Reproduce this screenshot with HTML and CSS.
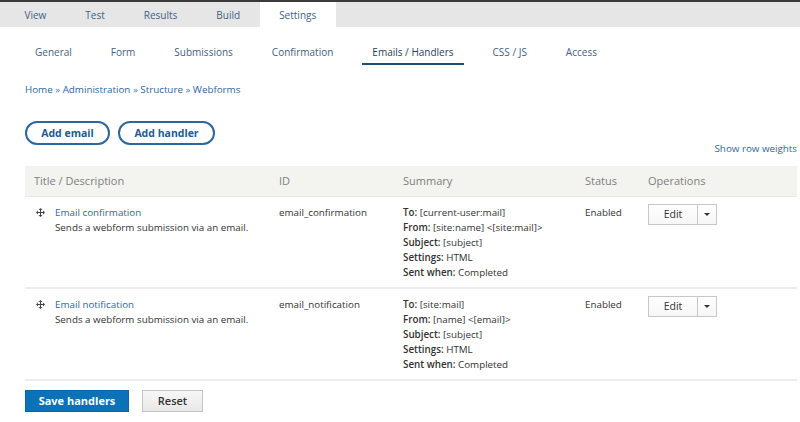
FILE: index.html
```html
<!DOCTYPE html>
<html>
<head>
<meta charset="utf-8">
<link rel="stylesheet" href="styles.css">
</head>
<body>
<nav class="primary-tabs">
  <a class="ptab">View</a>
  <a class="ptab">Test</a>
  <a class="ptab">Results</a>
  <a class="ptab">Build</a>
  <a class="ptab active">Settings</a>
</nav>
<nav class="secondary-tabs">
  <a class="stab">General</a>
  <a class="stab">Form</a>
  <a class="stab">Submissions</a>
  <a class="stab">Confirmation</a>
  <a class="stab active">Emails / Handlers</a>
  <a class="stab">CSS / JS</a>
  <a class="stab">Access</a>
</nav>
<main class="content">
  <div class="breadcrumb"><a>Home</a> » <a>Administration</a> » <a>Structure</a> » <a>Webforms</a></div>
  <div class="actions">
    <a class="pill">Add email</a>
    <a class="pill">Add handler</a>
  </div>
  <div class="weights"><a>Show row weights</a></div>
  <table class="handlers">
    <thead>
      <tr>
        <th class="c1">Title / Description</th>
        <th class="c2">ID</th>
        <th class="c3">Summary</th>
        <th class="c4">Status</th>
        <th class="c5">Operations</th>
      </tr>
    </thead>
    <tbody>
      <tr>
        <td class="c1">
          <div class="title-cell">
            <svg class="drag" width="9" height="9" viewBox="0 0 9 9"><path d="M4.5 0 L6.5 2 H5 V4 H7 V2.5 L9 4.5 L7 6.5 V5 H5 V7 H6.5 L4.5 9 L2.5 7 H4 V5 H2 V6.5 L0 4.5 L2 2.5 V4 H4 V2 H2.5 Z" fill="#444"/></svg>
            <div><a class="link">Email confirmation</a><div>Sends a webform submission via an email.</div></div>
          </div>
        </td>
        <td class="c2">email_confirmation</td>
        <td class="c3">
          <div><b>To:</b> [current-user:mail]</div>
          <div><b>From:</b> [site:name] &lt;[site:mail]&gt;</div>
          <div><b>Subject:</b> [subject]</div>
          <div><b>Settings:</b> HTML</div>
          <div><b>Sent when:</b> Completed</div>
        </td>
        <td class="c4">Enabled</td>
        <td class="c5"><div class="dropbutton"><span class="edit">Edit</span><span class="toggle"><span class="caret"></span></span></div></td>
      </tr>
      <tr>
        <td class="c1">
          <div class="title-cell">
            <svg class="drag" width="9" height="9" viewBox="0 0 9 9"><path d="M4.5 0 L6.5 2 H5 V4 H7 V2.5 L9 4.5 L7 6.5 V5 H5 V7 H6.5 L4.5 9 L2.5 7 H4 V5 H2 V6.5 L0 4.5 L2 2.5 V4 H4 V2 H2.5 Z" fill="#444"/></svg>
            <div><a class="link">Email notification</a><div>Sends a webform submission via an email.</div></div>
          </div>
        </td>
        <td class="c2">email_notification</td>
        <td class="c3">
          <div><b>To:</b> [site:mail]</div>
          <div><b>From:</b> [name] &lt;[email]&gt;</div>
          <div><b>Subject:</b> [subject]</div>
          <div><b>Settings:</b> HTML</div>
          <div><b>Sent when:</b> Completed</div>
        </td>
        <td class="c4">Enabled</td>
        <td class="c5"><div class="dropbutton"><span class="edit">Edit</span><span class="toggle"><span class="caret"></span></span></div></td>
      </tr>
    </tbody>
  </table>
  <div class="form-actions">
    <button class="btn primary">Save handlers</button>
    <button class="btn secondary">Reset</button>
  </div>
</main>
</body>
</html>
```
FILE: styles.css
```css
* { box-sizing: border-box; }
html, body {
  margin: 0;
  padding: 0;
  background: #fff;
  font-family: "Open Sans", "Liberation Sans", sans-serif;
  font-size: 9.8px;
  color: #333;
}
a { text-decoration: none; cursor: pointer; }

.primary-tabs {
  display: flex;
  border-top: 2px solid #3b3b3b;
  background: #e6e6e6;
  height: 27px;
  padding-left: 5px;
}
.ptab {
  display: flex;
  align-items: center;
  padding: 1px 19.5px 0;
  font-size: 10px;
  color: #3f6285;
}
.ptab.active { background: #fff; }

.secondary-tabs {
  display: flex;
  padding-left: 25px;
  gap: 19px;
  height: 38px;
  align-items: stretch;
}
.stab {
  display: flex;
  align-items: center;
  padding: 14px 10px 0;
  font-size: 10px;
  color: #3f6285;
  border-bottom: 2px solid transparent;
}
.stab.active {
  color: #24425f;
  border-bottom-color: #1e4e7a;
}

.content {
  padding: 0 3px 0 25px;
}
.breadcrumb {
  margin-top: 17px;
  height: 15px;
  line-height: 15px;
  color: #4a7bb0;
}
.breadcrumb a { color: #2b68a6; }

.actions {
  display: flex;
  gap: 8px;
  margin-top: 24px;
}
.pill {
  display: flex;
  align-items: center;
  justify-content: center;
  height: 24px;
  border: 2px solid #2c66a3;
  border-radius: 12px;
  font-weight: bold;
  font-size: 10.5px;
  color: #245b93;
}
.pill:first-child { width: 85px; }
.pill:last-child { width: 97px; }

.weights {
  display: flex;
  justify-content: flex-end;
  height: 15px;
  line-height: 15px;
  margin-top: -4px;
}
.weights a { color: #2b68a6; }

.handlers {
  width: 772px;
  border-collapse: collapse;
  margin-top: 10px;
  table-layout: fixed;
}
.handlers th {
  background: #f3f3f0;
  text-align: left;
  font-weight: normal;
  color: #808080;
  font-size: 11px;
  height: 30px;
  padding: 0 9px;
  border-bottom: 1px solid #e8e8e4;
}
.handlers td {
  vertical-align: top;
  padding: 8px 9px 7px;
  line-height: 15px;
  border-bottom: 2px solid #ececec;
}
.c1 { width: 245px; }
.c2 { width: 124px; }
.c3 { width: 182px; }
.c4 { width: 63px; }
.c5 { width: 158px; }

.title-cell {
  display: flex;
  gap: 10px;
}
.drag { margin-top: 3px; margin-left: 2px; flex: none; }
.link { color: #2b68a6; }

.c3 b { font-weight: 600; }

.dropbutton {
  display: flex;
  width: 69px;
  height: 21px;
  border: 1px solid #c8c8c8;
  background: linear-gradient(#ffffff, #f6f6f6);
  margin-top: -1px;
}
.dropbutton .edit {
  width: 49px;
  display: flex;
  align-items: center;
  justify-content: center;
  border-right: 1px solid #c8c8c8;
  color: #333;
  font-size: 10.5px;
}
.dropbutton .toggle {
  flex: 1;
  display: flex;
  align-items: center;
  justify-content: center;
}
.caret {
  width: 0; height: 0;
  border-left: 3px solid transparent;
  border-right: 3px solid transparent;
  border-top: 3px solid #333;
}

.form-actions {
  display: flex;
  gap: 13px;
  margin-top: 9px;
}
.btn {
  height: 22px;
  font-family: inherit;
  font-size: 11px;
  font-weight: 600;
  padding: 0;
  cursor: pointer;
}
.btn.primary {
  width: 104px;
  background: #0b72b8;
  color: #fff;
  border: 1px solid #0a68a8;
  font-weight: bold;
}
.btn.secondary {
  width: 61px;
  background: linear-gradient(#f7f7f7, #e8e8e8);
  border: 1px solid #c4c4c4;
  color: #333;
}
```
